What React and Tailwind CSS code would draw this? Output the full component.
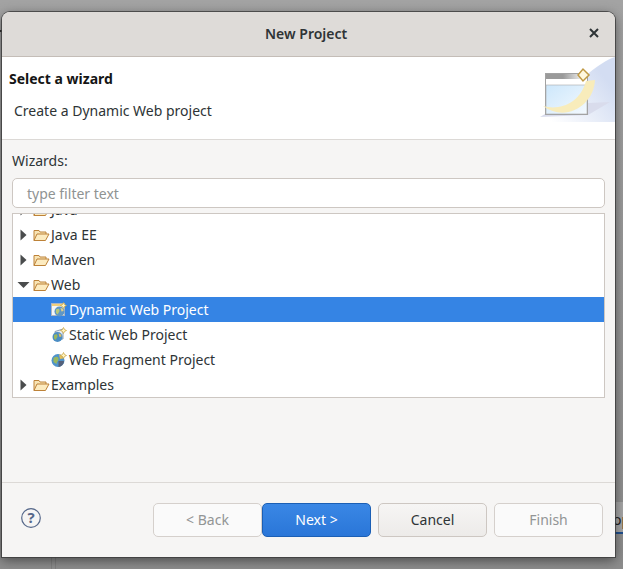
const font = { fontFamily: '"Noto Sans", sans-serif' };

function Arrow({ open }) {
  return open ? (
    <svg width="14" height="10" viewBox="0 0 14 10" className="ml-[4px] shrink-0">
      <path d="M0.500 2h12L6.500 8z" fill="#4a4c4d" />
    </svg>
  ) : (
    <svg width="14" height="14" viewBox="0 0 14 14" className="ml-[4px] shrink-0">
      <path d="M3.500 1.500v11l6-5.500z" fill="#4a4c4d" />
    </svg>
  );
}

function Folder() {
  return (
    <svg width="17" height="14" viewBox="0 0 17 14" className="ml-[2px] shrink-0">
      <path d="M1 12.500V2.500h5l1 1.500h6v2" fill="#f8e4b4" stroke="#bd8238" />
      <path d="M1 12.500l3-6.500h12l-3.500 6.500z" fill="#fcebc0" stroke="#bd8238" />
    </svg>
  );
}

function WebIcon({ kind }) {
  return (
    <svg width="16" height="16" viewBox="0 0 16 16" className="shrink-0">
      {kind === "dynamic" && (
        <>
          <rect x="0.500" y="1.500" width="13" height="12" fill="#f4f6f9" stroke="#aeb6c0" />
          <rect x="1" y="2" width="12" height="2" fill="#f0cf7c" />
          <circle cx="8.500" cy="9.500" r="5" fill="#5f97c6" />
          <path d="M5 7.500c2-1.500 3.500-1 3.500 1s-1.500 2-1.500 4l-2-1.500z" fill="#b7c878" />
          <path d="M9.500 6c2 0 3 1 3 3l-2 .5z" fill="#e3cf85" />
        </>
      )}
      {kind === "static" && (
        <>
          <path d="M4 4.500l8-2.500v10H4z" fill="#e7edf4" stroke="#8fa0b2" />
          <circle cx="6.500" cy="10" r="5" fill="#4b8dc4" />
          <path d="M3 8c2-1.500 3.500-1 3.500 1s-1.500 2-1.500 4l-2-1.500z" fill="#9ab85e" />
          <path d="M7.500 6.500c2 0 3 1 3 3l-2 .5z" fill="#e0bd5c" />
        </>
      )}
      {kind === "fragment" && (
        <>
          <circle cx="7" cy="8.500" r="6.500" fill="#4f93cb" />
          <path d="M2.500 6c2.500-2 5-1.500 5 1s-2 2.500-2 5l-3-2z" fill="#9ab85e" />
          <path d="M8 2.500c3 0 4 2 4 4l-3 .5z" fill="#e0bd5c" />
          <path d="M7.500 9h5.500c0 3-2.500 5.500-5.500 6z" fill="#55617a" />
        </>
      )}
      <path d="M12.500 0.500l1 2 2 1-2 1-1 2-1-2-2-1 2-1z" fill="#fff3c0" stroke="#c9a13b" strokeWidth="0.700" />
    </svg>
  );
}

function WizardBanner() {
  return (
    <svg width="75" height="66" viewBox="0 0 75 66" className="shrink-0">
      <defs>
        <linearGradient id="bannerBg" x1="0" y1="1" x2="1" y2="0.300">
          <stop offset="0.100" stopColor="#ffffff" />
          <stop offset="0.900" stopColor="#d3ddf2" />
        </linearGradient>
        <linearGradient id="bannerGlass" x1="0" y1="0" x2="1" y2="1">
          <stop offset="0" stopColor="#cde7fb" />
          <stop offset="1" stopColor="#f3f9fe" />
        </linearGradient>
        <linearGradient id="bannerBar" x1="0" y1="0" x2="1" y2="0">
          <stop offset="0.500" stopColor="#9a9a9a" />
          <stop offset="1" stopColor="#e6e6e6" />
        </linearGradient>
      </defs>
      <path d="M0 65h75V0C60 4 30 30 0 65z" fill="url(#bannerBg)" />
      <path d="M0 60L48 58L70 45L48 46L5 57z" fill="#d9dcec" />
      <rect x="5.500" y="16.500" width="42" height="41" fill="#ffffff" stroke="#a2a2a2" />
      <rect x="6" y="17" width="34" height="5" fill="url(#bannerBar)" />
      <rect x="6" y="28" width="41" height="29" fill="url(#bannerGlass)" stroke="#a9a9a9" strokeWidth="0.600" />
      <path d="M3 49C20 54 40 46 46 24l9-1C54 48 26 66 3 49z" fill="#f8ecbb" />
      <path d="M38 18l5-6 6 6-6 6z" fill="#fff8df" stroke="#c09a45" strokeWidth="1.500" />
    </svg>
  );
}

function Row({ arrow, icon, label, selected, indent }) {
  return (
    <div className={`flex items-center h-[25px] shrink-0 text-[14px] ${selected ? "bg-[#3584e4] text-white" : "text-[#2e3436]"}`}>
      {indent ? <div className="w-[38px] shrink-0" /> : <Arrow open={arrow === "open"} />}
      {icon}
      <span className={indent ? "ml-[2px]" : "ml-[1px]"}>{label}</span>
    </div>
  );
}

function Btn({ label, kind }) {
  const styles = {
    primary: "bg-gradient-to-b from-[#3a87e5] to-[#2a76d8] border-[#1b5fb5] text-white",
    normal: "bg-gradient-to-b from-[#f6f5f4] to-[#edebe9] border-[#cdc7c2] text-[#2e3436]",
    disabled: "bg-[#fafafa] border-[#d5d0cc] text-[#929595]",
  };
  return (
    <button className={`w-[109px] h-[34px] pb-[2px] rounded-[5px] border text-[14px] ${styles[kind]}`}>
      {label}
    </button>
  );
}

export default function App() {
  return (
    <div style={font} className="flex w-[623px] h-[569px] pt-[12px] overflow-hidden bg-gradient-to-b from-[#a3a3a3] to-[#8d8d8d]">
      {/* sliver of the window behind, left of the dialog */}
      <div className="w-[2px] shrink-0">
        <div className="h-[2px] mt-[18px] bg-[#333]" />
      </div>

      <div className="flex flex-col w-[613px] shrink-0">
        <div className="relative z-10 flex flex-col h-[545px] rounded-t-[8px] bg-[#f6f5f4] shadow-[0_0_0_1px_rgba(60,60,60,0.8),0_3px_12px_rgba(0,0,0,0.5)] overflow-hidden">
          {/* title bar */}
          <div className="flex items-center h-[45px] shrink-0 bg-[#dedbd8] border-b border-[#c4bdb7] pl-[263px] pr-[16px] pb-[2px]">
            <span className="text-[14px] font-semibold text-[#2e3436]">New Project</span>
            <svg width="10" height="10" viewBox="0 0 10 10" className="ml-auto">
              <path d="M1 1l8 8M9 1l-8 8" stroke="#2e3436" strokeWidth="2" />
            </svg>
          </div>

          {/* wizard header */}
          <div className="flex justify-between h-[83px] shrink-0 bg-white border-b border-[#dcd9d6]">
            <div className="pl-[7px] pt-[12px]">
              <div className="text-[14px] font-bold leading-[20px] text-[#151515]">Select a wizard</div>
              <div className="pl-[5px] pt-[12px] text-[14px] leading-[20px] text-[#2e3436]">Create a Dynamic Web project</div>
            </div>
            <WizardBanner />
          </div>

          {/* body */}
          <div className="flex flex-col flex-1 px-[10px]">
            <div className="pt-[11px] text-[14px] leading-[20px] text-[#2e3436]">Wizards:</div>
            <div className="flex items-center h-[30px] mt-[7px] px-[14px] rounded-[5px] border border-[#cdc7c2] bg-white text-[14px] text-[#8f9393]">
              type filter text
            </div>
            <div className="flex flex-col h-[185px] mt-[5px] w-[593px] border border-[#cdc7c2] bg-white overflow-hidden">
              <div className="-mt-[17px]">
                <Row label="Java" icon={<Folder />} />
              </div>
              <Row label="Java EE" icon={<Folder />} />
              <Row label="Maven" icon={<Folder />} />
              <Row arrow="open" label="Web" icon={<Folder />} />
              <Row indent selected label="Dynamic Web Project" icon={<WebIcon kind="dynamic" />} />
              <Row indent label="Static Web Project" icon={<WebIcon kind="static" />} />
              <Row indent label="Web Fragment Project" icon={<WebIcon kind="fragment" />} />
              <Row label="Examples" icon={<Folder />} />
            </div>
          </div>

          {/* footer */}
          <div className="flex items-center h-[75px] shrink-0 border-t border-[#dcd9d6] pl-[19px] pr-[12px]">
            <svg width="20" height="20" viewBox="0 0 20 20" className="mb-[4px]">
              <circle cx="10" cy="10" r="9.300" fill="#f6f5f4" stroke="#56688a" strokeWidth="1.200" />
              <text x="10" y="15" textAnchor="middle" fontSize="15" fontWeight="700" fill="#56688a">?</text>
            </svg>
            <div className="flex ml-auto">
              <Btn label="< Back" kind="disabled" />
              <Btn label="Next >" kind="primary" />
              <div className="ml-[7px]"><Btn label="Cancel" kind="normal" /></div>
              <div className="ml-[7px]"><Btn label="Finish" kind="disabled" /></div>
            </div>
          </div>
        </div>
        {/* divider of the window behind, below the dialog */}
        <div className="h-[12px] w-[5px] ml-[49px] border-x border-[#7f7f7f]" />
      </div>

      {/* what shows behind the dialog on the right */}
      <div className="flex-1 min-w-0 mt-[489px]">
        <div className="h-[33px] -ml-[5px] pl-[3px] pt-[8px] bg-[#a6a6a6] border-t border-[#8f8f8f] border-b-2 border-b-[#1f4f8f] text-[14px] leading-[20px] text-[#222] whitespace-nowrap">op</div>
      </div>
    </div>
  );
}
